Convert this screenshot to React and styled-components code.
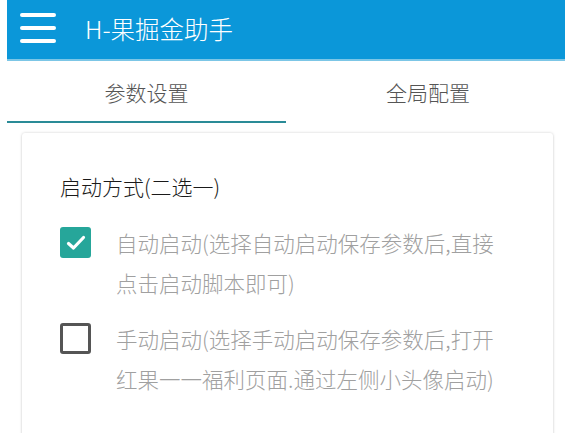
import styled, { createGlobalStyle } from 'styled-components';

const GlobalStyle = createGlobalStyle`
  body {
    margin: 0;
    background: #fff;
    font-family: "Noto Sans CJK SC", "Noto Sans", sans-serif;
  }
`

const options = [
  { checked: true, text: "自动启动(选择自动启动保存参数后,直接点击启动脚本即可)" },
  { checked: false, text: "手动启动(选择手动启动保存参数后,打开红果一一福利页面.通过左侧小头像启动)" },
]

function Check({ checked }) {
  return (
    <Box checked={checked}>
      {checked &&
        <svg width="20" height="16" viewBox="0 0 20 16">
          <path d="M2.5 8.5 L7.5 13 L17.5 2.5" fill="none" stroke="#fff" strokeWidth="3.2" strokeLinecap="round" strokeLinejoin="round" />
        </svg>
      }
    </Box>
  )
}

function App() {
  return (
    <Page>
      <GlobalStyle />
      <Header>
        <Menu>
          <span /><span /><span />
        </Menu>
        <Title>H-果掘金助手</Title>
      </Header>
      <Tabs>
        <Tab active>参数设置</Tab>
        <Tab>全局配置</Tab>
      </Tabs>
      <Card>
        <Section>启动方式(二选一)</Section>
        {
          options.map((o, i) =>
            <Option key={i}>
              <Check checked={o.checked} />
              <OptionText>{o.text}</OptionText>
            </Option>
          )
        }
      </Card>
    </Page>
  );
}

const Page = styled.div`
  width: 558px;
  margin-left: 7px;
  height: 433px;
  overflow: hidden;
`
const Header = styled.div`
  height: 59px;
  background: #0b97d9;
  border-bottom: 2px solid #7cc6e6;
  display: flex;
  align-items: center;
`
const Menu = styled.div`
  width: 36px;
  margin-left: 13px;
  margin-top: -3px;
  display: flex;
  flex-direction: column;
  gap: 9.5px;
  span {
    height: 3.5px;
    border-radius: 2px;
    background: #fff;
  }
`
const Title = styled.div`
  margin-left: 29px;
  margin-top: -2px;
  color: #fff;
  font-size: 24.5px;
  font-weight: 300;
`
const Tabs = styled.div`
  display: grid;
  grid-template-columns: 1fr 1fr;
  height: 62px;
`
const Tab = styled.div`
  display: flex;
  align-items: center;
  justify-content: center;
  padding-top: 1px;
  padding-left: ${p => p.active ? '0' : '5px'};
  font-size: 21px;
  font-weight: 300;
  color: #555;
  border-bottom: 2.5px solid ${p => p.active ? '#2a8b97' : 'transparent'};
`
const Card = styled.div`
  margin: 10px 12px 0 15px;
  background: #fff;
  border-radius: 3px;
  box-shadow: 0 0 3px rgba(0,0,0,0.18), 0 1px 2px rgba(0,0,0,0.08);
  padding: 38px 40px 40px 38px;
  height: 320px;
`
const Section = styled.div`
  font-size: 21px;
  font-weight: 300;
  color: #1a1a1a;
  line-height: 30px;
`
const Option = styled.div`
  display: flex;
  align-items: flex-start;
  margin-top: 24px;
  & + & {
    margin-top: 18px;
  }
`
const Box = styled.div`
  flex: none;
  width: ${p => p.checked ? '31px' : '25px'};
  height: ${p => p.checked ? '31px' : '25px'};
  border-radius: 3px;
  margin-top: 2px;
  background: ${p => p.checked ? '#26a69a' : 'transparent'};
  border: ${p => p.checked ? 'none' : '3px solid #555'};
  display: flex;
  align-items: center;
  justify-content: center;
`
const OptionText = styled.div`
  margin-left: 25px;
  font-size: 21.5px;
  font-weight: 300;
  line-height: 40px;
  color: #a0a0a0;
  margin-top: -2px;
`

export default App;
